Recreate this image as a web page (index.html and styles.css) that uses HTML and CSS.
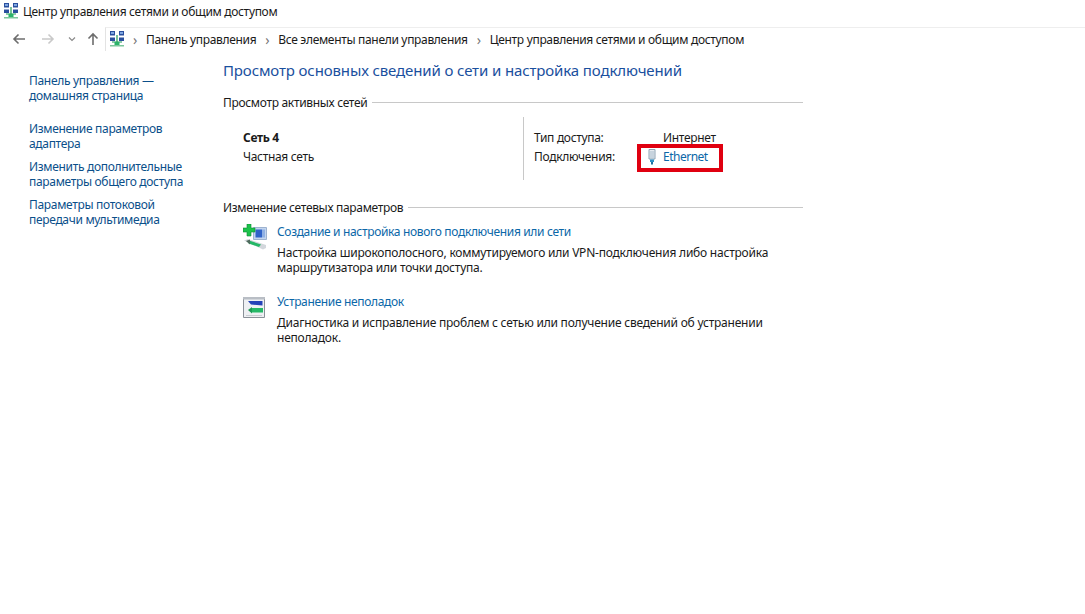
FILE: index.html
```html
<!DOCTYPE html>
<html lang="ru">
<head>
<meta charset="utf-8">
<title>Центр управления сетями и общим доступом</title>
<link rel="stylesheet" href="styles.css">
</head>
<body>
<svg class="defs" width="0" height="0" aria-hidden="true">
  <symbol id="net" viewBox="0 0 16 16">
    <rect x="1" y="0" width="5" height="4.500" fill="#2a4f9e"/>
    <rect x="2" y="1" width="3" height="2" fill="#7fa6e0"/>
    <rect x="10" y="0" width="5" height="4.500" fill="#2a4f9e"/>
    <rect x="11" y="1" width="3" height="2" fill="#7fa6e0"/>
    <rect x="1" y="6.500" width="5" height="3.500" fill="#2a4f9e"/>
    <rect x="10" y="6.500" width="5" height="3.500" fill="#2a4f9e"/>
    <path d="M8 4v7M3 11h10" stroke="#1f9a55" stroke-width="1.200" fill="none"/>
    <rect x="5.500" y="11" width="5" height="3" fill="#2bb36a"/>
    <rect x="1" y="14" width="14" height="1.500" fill="#7cc79b"/>
  </symbol>
</svg>
<div class="titlebar">
  <svg class="icon16"><use href="#net"/></svg>
  <span>Центр управления сетями и общим доступом</span>
</div>
<div class="navbar">
  <svg class="nav-arrow" width="14" height="12" viewBox="0 0 14 12"><path d="M13 6H2M6.500 1.500 2 6l4.500 4.500" fill="none" stroke="#6d6d6d" stroke-width="1.600"/></svg>
  <svg class="nav-arrow fwd" width="14" height="12" viewBox="0 0 14 12"><path d="M1 6h11M7.500 1.500 12 6l-4.500 4.500" fill="none" stroke="#c9c9c9" stroke-width="1.600"/></svg>
  <svg class="nav-drop" width="8" height="6" viewBox="0 0 8 6"><path d="M1 1.500 4 4.500l3-3" fill="none" stroke="#8a8a8a" stroke-width="1.200"/></svg>
  <svg class="nav-up" width="12" height="14" viewBox="0 0 12 14"><path d="M6 13V2M1.500 6.500 6 2l4.500 4.500" fill="none" stroke="#6d6d6d" stroke-width="1.600"/></svg>
  <div class="address">
    <svg class="icon16 addr-icon"><use href="#net"/></svg>
    <span class="sep">›</span><span>Панель управления</span>
    <span class="sep">›</span><span>Все элементы панели управления</span>
    <span class="sep">›</span><span>Центр управления сетями и общим доступом</span>
  </div>
</div>
<div class="layout">
  <nav class="side">
    <a class="side-item">Панель управления —<br>домашняя страница</a>
    <a class="side-item gap">Изменение параметров<br>адаптера</a>
    <a class="side-item">Изменить дополнительные<br>параметры общего доступа</a>
    <a class="side-item">Параметры потоковой<br>передачи мультимедиа</a>
  </nav>
  <main class="main">
    <h1 class="heading">Просмотр основных сведений о сети и настройка подключений</h1>
    <div class="legend"><span>Просмотр активных сетей</span><i></i></div>
    <section class="active">
      <div class="net-name">
        <strong>Сеть 4</strong>
        <span>Частная сеть</span>
      </div>
      <div class="net-info">
        <div class="row"><span class="label">Тип доступа:</span><span>Интернет</span></div>
        <div class="row"><span class="label">Подключения:</span>
          <span class="conn">
            <svg class="plug" width="10" height="16" viewBox="0 0 10 16"><path d="M2 .5h6v9.500H2z" fill="#e6ebf0" stroke="#8da2b3"/><path d="M4 2v7M6 2v7" stroke="#a9bccb"/><path d="M3 10.500h4V13H3z" fill="#2a8fc4"/><path d="M4 13h2v2.500H4z" fill="#1d6f9e"/></svg>
            <a>Ethernet</a>
          </span>
        </div>
      </div>
    </section>
    <div class="legend second"><span>Изменение сетевых параметров</span><i></i></div>
    <section class="tasks">
      <div class="task">
        <svg class="task-icon" width="26" height="26" viewBox="0 0 26 26">
          <path d="M10.500 3.500h13v12h-13z" fill="#c3d5ee" stroke="#9db2d0"/>
          <path d="M12.500 5.500h6.500v8h-6.500z" fill="#2f62c8"/>
          <path d="M19 5.500h3v8h-3z" fill="#8fb0e4"/>
          <path d="M4 0h4v4h4v4H8v4H4V8H0V4h4z" fill="#1cc24a" stroke="#0f8a38" stroke-width=".6"/>
          <path d="M1 16.500l4-1.500 18 6v3l-3 1.500z" fill="#d3d7dc"/>
          <path d="M6 16.500l12 4-2 2.500-10.500-3.500z" fill="#25b866"/>
          <path d="M3 17l4-1.500v5z" fill="#4f6a5c"/>
        </svg>
        <div class="task-body">
          <a>Создание и настройка нового подключения или сети</a>
          <p>Настройка широкополосного, коммутируемого или VPN-подключения либо настройка<br>маршрутизатора или точки доступа.</p>
        </div>
      </div>
      <div class="task">
        <svg class="task-icon" width="26" height="26" viewBox="0 0 26 26">
          <path d="M.5 3.500h21v20H.5z" fill="#eef0f3" stroke="#8a9098"/>
          <path d="M0 3h22v2.500H0z" fill="#b9bec5"/>
          <path d="M5 7h14.500v4.500L8 10.500z" fill="#2342b8"/>
          <path d="M9 14h11v4.500H8z" fill="#25b866"/>
          <path d="M9 13v6.500L5 16z" fill="#1c9a55"/>
          <path d="M3 21h16v1H3z" fill="#c9cdd2"/>
        </svg>
        <div class="task-body">
          <a>Устранение неполадок</a>
          <p>Диагностика и исправление проблем с сетью или получение сведений об устранении<br>неполадок.</p>
        </div>
      </div>
    </section>
  </main>
</div>
</body>
</html>
```

FILE: styles.css
```css
* { box-sizing: border-box; }
html, body { margin: 0; height: 100%; }
body {
  width: 1085px;
  height: 614px;
  overflow: hidden;
  background: #fff;
  color: #1a1a1a;
  font: 12px/15px "Noto Sans", "Open Sans", sans-serif;
  letter-spacing: -0.32px;
}
.defs { position: absolute; }
a { color: #0b67a8; }
.icon16 { width: 16px; height: 16px; flex: none; }
.titlebar {
  display: flex;
  align-items: center;
  gap: 4px;
  height: 24px;
  padding: 0 0 2px 3px;
}
.navbar {
  display: flex;
  align-items: center;
  height: 29px;
  padding-left: 12px;
}
.nav-arrow { margin-right: 15px; }
.fwd { margin-right: 13px; }
.nav-drop { margin-right: 11px; }
.nav-up { margin-right: 6px; }
.address {
  display: flex;
  align-items: center;
  gap: 9px;
  flex: 1;
  height: 24px;
  border-left: 1px solid #e3e3e3;
  border-top: 1px solid #eee;
  padding-left: 3px;
}
.addr-icon { margin-right: -1px; }
.sep { color: #777; font-size: 14px; }
.layout {
  display: grid;
  grid-template-columns: 223px 580px;
}
.side {
  display: flex;
  flex-direction: column;
  gap: 8px;
  padding: 20px 0 0 29px;
}
.side-item { color: #0b4f8a; display: block; }
.side-item.gap { margin-top: 10px; }
.main { padding-top: 7px; }
.heading {
  margin: 0;
  font-weight: 400;
  font-size: 15px;
  line-height: 20px;
  color: #1a4f9e;
  letter-spacing: -0.125px;
}
.legend {
  display: flex;
  align-items: center;
  gap: 5px;
  margin-top: 15px;
}
.legend.second { margin-top: 20px; }
.legend i { flex: 1; height: 1px; background: #c8c8c8; }
.active {
  display: flex;
  height: 63px;
  margin-top: 7px;
}
.net-name {
  width: 300px;
  padding: 13px 0 0 20px;
  display: flex;
  flex-direction: column;
  gap: 4px;
}
.net-info {
  flex: 1;
  border-left: 1px solid #c8c8c8;
  padding: 13px 0 0 10px;
  display: flex;
  flex-direction: column;
  gap: 4px;
}
.row { display: flex; }
.label { width: 129px; }
.conn {
  position: relative;
  display: flex;
  align-items: center;
  gap: 6px;
  letter-spacing: -0.5px;
}
.conn::after {
  content: "";
  position: absolute;
  left: -26px;
  top: -5px;
  width: 78px;
  height: 20px;
  border: 4px solid #e00010;
}
.plug { margin: -1px 0 -1px -16px; }
.tasks {
  display: flex;
  flex-direction: column;
  gap: 19px;
  margin-top: 9px;
}
.task { display: flex; gap: 8px; padding-left: 20px; }
.task-icon { flex: none; }
.task-body { flex: 1; letter-spacing: -0.22px; }
.task-body a { display: block; margin-bottom: 6px; letter-spacing: -0.34px; }
.task-body p { margin: 0; }
```
